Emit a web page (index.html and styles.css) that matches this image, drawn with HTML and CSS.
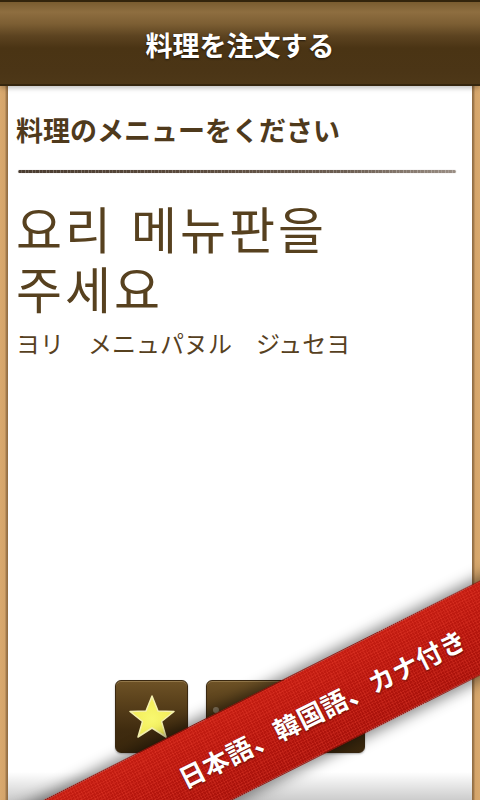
FILE: index.html
```html
<!DOCTYPE html>
<html lang="ja">
<head>
<meta charset="utf-8">
<link rel="stylesheet" href="styles.css">
</head>
<body>
<div class="app">
  <header class="topbar">
    <h1 class="topbar-title">料理を注文する</h1>
  </header>
  <div class="main">
    <div class="side side-left"></div>
    <section class="panel">
      <h2 class="phrase-ja">料理のメニューをください</h2>
      <div class="rule"></div>
      <p class="phrase-ko" lang="ko">요리 메뉴판을<br>주세요</p>
      <p class="phrase-kana">ヨリ　メニュパヌル　ジュセヨ</p>
      <div class="spacer"></div>
      <div class="buttons">
        <button class="btn btn-star" aria-label="お気に入り">
          <svg width="48" height="46" viewBox="0 0 48 46">
            <defs>
              <radialGradient id="sg" cx="50%" cy="55%" r="55%">
                <stop offset="0" stop-color="#f8f870"/>
                <stop offset="0.75" stop-color="#f3ee5c"/>
                <stop offset="1" stop-color="#e9e49a"/>
              </radialGradient>
            </defs>
            <path d="M24 2 L30 17 L46 17.5 L33.5 27.5 L38 43 L24 34 L10 43 L14.5 27.5 L2 17.5 L18 17 Z" fill="url(#sg)" stroke="#f6f2b0" stroke-width="1.5" stroke-linejoin="round"/>
          </svg>
        </button>
        <button class="btn btn-wide" aria-label="再生"><span class="btn-dot"></span></button>
      </div>
      <div class="bottom-shade"></div>
    </section>
    <div class="side side-right"></div>
  </div>
</div>
<div class="ribbon-clip">
  <div class="ribbon"><span class="ribbon-text">日本語、韓国語、カナ付き</span></div>
</div>
</body>
</html>
```
FILE: styles.css
```css
html, body {
  margin: 0;
  padding: 0;
}
body {
  width: 480px;
  height: 800px;
  overflow: hidden;
  position: relative;
  font-family: "Noto Sans CJK JP", "Noto Sans CJK KR", sans-serif;
  background: #d6a66c;
}
.app {
  display: flex;
  flex-direction: column;
  height: 800px;
}
.topbar {
  height: 86px;
  flex: 0 0 86px;
  box-sizing: border-box;
  border-top: 2px solid #33240c;
  border-bottom: 2px solid #35260e;
  background: linear-gradient(to bottom,
    #7a5c30 0px,
    #8e6e40 10px,
    #7c5e33 22px,
    #5c4320 34px,
    #4a3414 46px,
    #4b3516 70px,
    #4e3818 84px);
  display: flex;
  align-items: center;
  justify-content: center;
  position: relative;
  z-index: 2;
  box-shadow: 0 2px 5px rgba(0,0,0,0.25);
}
.topbar-title {
  margin: 0;
  padding-top: 2px;
  color: #ffffff;
  font-size: 27px;
  font-weight: 700;
  text-shadow: 0 1px 2px rgba(0,0,0,0.6);
}
.main {
  flex: 1;
  display: flex;
  min-height: 0;
}
.side {
  width: 8px;
  flex: 0 0 8px;
  background: #d6a66c;
}
.side-left {
  background: linear-gradient(to right, #d9a96e 0, #d4a46a 5px, #a67e50 6px, #8e6a40 8px);
}
.side-right {
  background: linear-gradient(to left, #d9a96e 0, #d4a46a 5px, #a67e50 6px, #8e6a40 8px);
}
.panel {
  flex: 1;
  background: #ffffff;
  display: flex;
  flex-direction: column;
  position: relative;
  padding: 0 8px;
  color: #55401f;
}
.phrase-ja {
  margin: 24px 0 0 0;
  font-size: 27px;
  font-weight: 700;
  line-height: 40px;
  color: #4f3a1c;
}
.rule {
  margin: 20px 8px 0 2px;
  height: 3px;
  background:
    repeating-linear-gradient(to right, rgba(255,255,255,0.25) 0 1px, rgba(255,255,255,0) 1px 3px, rgba(255,255,255,0.15) 3px 4px, rgba(255,255,255,0) 4px 7px),
    linear-gradient(to right, #4a3c30 0, #5a4a3c 40%, #6c5e52 75%, #9a8e84 100%);
  border-radius: 2px;
  box-shadow: 0 0 1px rgba(60,45,30,0.4);
}
.phrase-ko {
  margin: 24px 0 0 0;
  font-family: "Noto Sans CJK KR", sans-serif;
  font-size: 50px;
  line-height: 60px;
  font-weight: 400;
  letter-spacing: 3px;
  color: #57411f;
}
.phrase-kana {
  margin: 10px 0 0 0;
  font-size: 24px;
  line-height: 32px;
  color: #57411f;
}
.spacer {
  flex: 1;
}
.buttons {
  display: flex;
  justify-content: center;
  gap: 18px;
  margin-bottom: 47px;
}
.btn {
  height: 73px;
  border: 1px solid #3a2810;
  border-radius: 6px;
  background: linear-gradient(to bottom, #6e5226 0, #5a411b 30%, #3f2b0f 70%, #3b280d 100%);
  box-shadow: inset 0 1px 0 rgba(255,230,180,0.25), 0 1px 2px rgba(0,0,0,0.3);
  display: flex;
  align-items: center;
  justify-content: center;
  padding: 0;
  position: relative;
}
.btn-star {
  width: 73px;
}
.btn-wide {
  width: 159px;
}
.btn-dot {
  position: absolute;
  left: 6px;
  top: 26px;
  width: 6px;
  height: 6px;
  border-radius: 3px;
  background: #8a7a60;
}
.bottom-shade {
  position: absolute;
  left: 0;
  right: 0;
  bottom: 0;
  height: 28px;
  background: linear-gradient(to bottom, rgba(0,0,0,0), rgba(0,0,0,0.2));
  pointer-events: none;
}
.ribbon-clip {
  position: absolute;
  left: 0;
  top: 0;
  width: 480px;
  height: 800px;
  overflow: hidden;
  pointer-events: none;
  z-index: 5;
}
.ribbon {
  position: absolute;
  left: -30px;
  top: 666px;
  width: 700px;
  height: 83px;
  transform: rotate(-26.7deg);
  transform-origin: 50% 50%;
  background:
    repeating-linear-gradient(to right, rgba(255,80,60,0.18) 0 1px, rgba(0,0,0,0) 1px 3px),
    repeating-linear-gradient(to bottom, rgba(255,80,60,0.18) 0 1px, rgba(0,0,0,0) 1px 3px),
    linear-gradient(to bottom, #c41d12 0, #b5150d 50%, #a8120b 100%);
  border-top: 1px solid #8a0e08;
  border-bottom: 1px solid #8a0e08;
  box-shadow: 0 0 14px 4px rgba(0,0,0,0.45);
  display: flex;
  align-items: center;
  justify-content: center;
}
.ribbon-text {
  color: #ffffff;
  font-size: 26px;
  font-weight: 700;
  letter-spacing: 0.5px;
  padding-left: 4px;
  text-shadow: 0 1px 2px rgba(0,0,0,0.5);
}
```
